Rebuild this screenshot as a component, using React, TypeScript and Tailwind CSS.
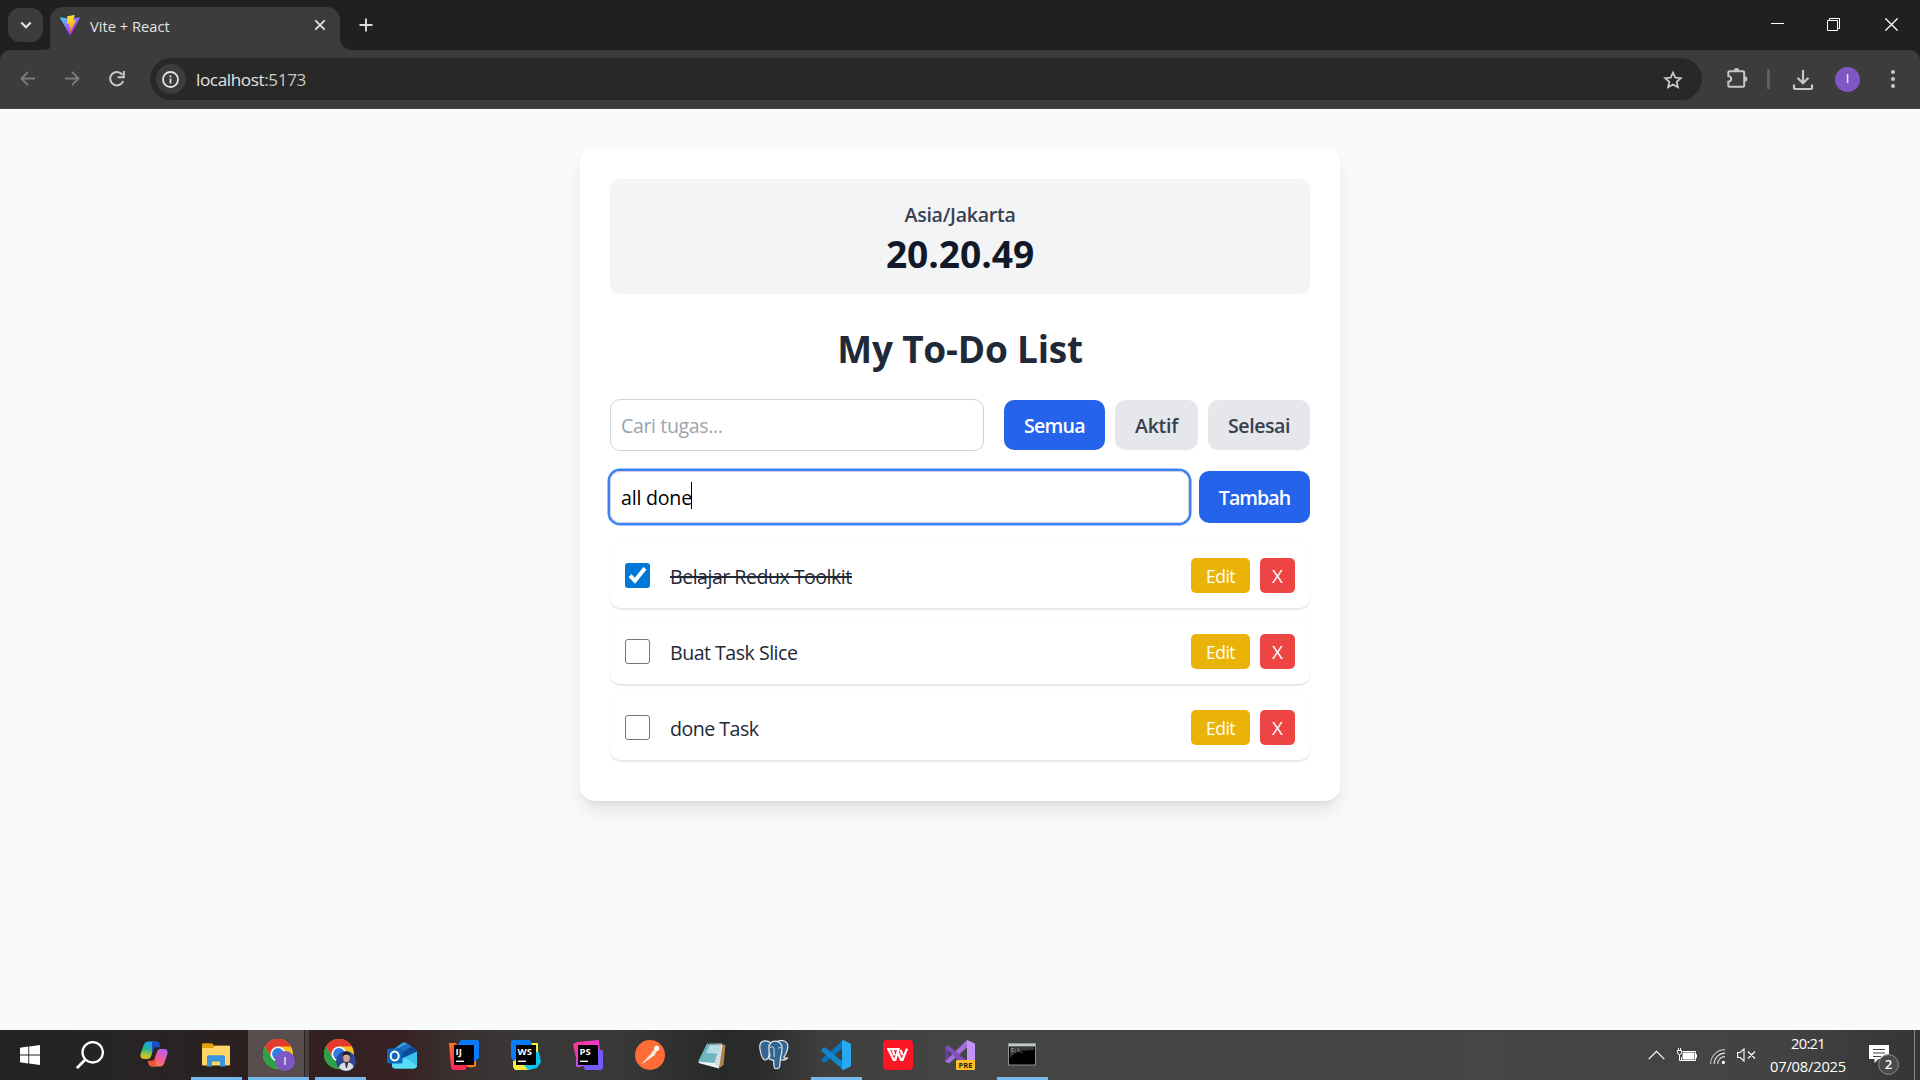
import type { ReactNode } from "react";

const ui = "font-['Open_Sans','Noto_Sans',sans-serif]";

/* ---------- Browser chrome ---------- */

function ViteLogo() {
  return (
    <svg className="size-5" viewBox="0 0 256 257">
      <defs>
        <linearGradient id="viteA" x1="0%" x2="58%" y1="8%" y2="79%">
          <stop offset="0%" stopColor="#41D1FF" />
          <stop offset="100%" stopColor="#BD34FE" />
        </linearGradient>
        <linearGradient id="viteB" x1="43%" x2="50%" y1="2%" y2="89%">
          <stop offset="0%" stopColor="#FFEA83" />
          <stop offset="8%" stopColor="#FFDD35" />
          <stop offset="100%" stopColor="#FFA800" />
        </linearGradient>
      </defs>
      <path
        fill="url(#viteA)"
        d="M255.153 37.938L134.897 252.976c-2.483 4.44-8.862 4.466-11.382.048L.875 37.958c-2.746-4.814 1.371-10.646 6.827-9.67l120.385 21.517a6.537 6.537 0 0 0 2.322-.004l117.867-21.483c5.438-.991 9.574 4.796 6.877 9.62Z"
      />
      <path
        fill="url(#viteB)"
        d="M185.432.063L96.44 17.501a3.268 3.268 0 0 0-2.634 3.014l-5.474 92.456a3.268 3.268 0 0 0 3.997 3.378l24.777-5.718c2.318-.535 4.413 1.507 3.936 3.838l-7.361 36.047c-.495 2.426 1.782 4.5 4.151 3.78l15.304-4.649c2.372-.72 4.652 1.36 4.15 3.788l-11.698 56.621c-.732 3.542 3.979 5.473 5.943 2.437l1.313-2.028l72.516-144.72c1.215-2.423-.88-5.186-3.54-4.672l-25.505 4.922c-2.396.462-4.435-1.77-3.759-4.114l16.646-57.705c.677-2.35-1.37-4.583-3.769-4.113Z"
      />
    </svg>
  );
}

function TabStrip() {
  return (
    <div className="flex h-[50px] bg-[#1f2120]">
      <div className="mt-2 ml-2 flex h-[34px] w-[35px] shrink-0 items-center justify-center rounded-xl bg-[#3c3c3c]">
        <svg className="size-[14px]" viewBox="0 0 14 14" fill="none" stroke="#e3e3e3" strokeWidth="2.2">
          <path d="M2.3 4.5L7 9.2l4.7-4.7" />
        </svg>
      </div>
      <div className="flex w-[13px] shrink-0 items-end self-stretch">
        <svg className="h-[13px] w-[13px]" viewBox="0 0 13 13">
          <path d="M13 0v13H0C8 13 13 8 13 0Z" fill="#3c3c3c" />
        </svg>
      </div>
      <div className="mt-[7px] -ml-[6px] flex h-[43px] w-[290px] shrink-0 items-center rounded-t-[13px] bg-[#3c3c3c] pr-[14px] pb-[7px] pl-[10px]">
        <ViteLogo />
        <span className="mt-px ml-[10px] flex-1 text-[14.7px] leading-5 whitespace-nowrap text-[#e3e3e3]">Vite + React</span>
        <svg className="size-3" viewBox="0 0 12 12" stroke="#e3e3e3" strokeWidth="1.8">
          <path d="M1.3 1.3l9.4 9.4M10.7 1.3L1.3 10.7" />
        </svg>
      </div>
      <div className="flex w-[13px] shrink-0 items-end">
        <svg className="h-[13px] w-[13px]" viewBox="0 0 13 13">
          <path d="M0 0v13h13C5 13 0 8 0 0Z" fill="#3c3c3c" />
        </svg>
      </div>
      <svg className="mt-[18px] ml-[6px] size-[14px]" viewBox="0 0 14 14" stroke="#dcdcdc" strokeWidth="1.9">
        <path d="M7 .5v13M.5 7h13" />
      </svg>
      <div className="ml-auto flex h-[50px] items-center text-white">
        <svg className="-mt-[3px] mr-[43px] h-[13px] w-[13px]" viewBox="0 0 13 13" stroke="currentColor">
          <path d="M0 6.5h13" />
        </svg>
        <svg className="-mt-[1px] mr-[45px] size-[13px]" viewBox="0 0 13 13" fill="none" stroke="currentColor">
          <path d="M.5 2.5h10v10H.5zM2.5 2.5v-2h10v10h-2" />
        </svg>
        <svg className="-mt-[1px] mr-[22px] size-[13px]" viewBox="0 0 13 13" stroke="currentColor" strokeWidth="1.3">
          <path d="M.4.4l12.2 12.2M12.6.4L.4 12.6" />
        </svg>
      </div>
    </div>
  );
}

function Toolbar() {
  return (
    <div className="bg-[#1f2120]">
      <div className="flex h-[59px] items-center rounded-t-[10px] border-b border-[#4a4a4a] bg-[#3c3c3c]">
        <svg className="-mt-px ml-[20px] size-[15px]" viewBox="0 0 15 15" fill="none" stroke="#7d7d7d" strokeWidth="1.8">
          <path d="M15 7.5H1.4M8 .9L1.4 7.5 8 14.1" />
        </svg>
        <svg className="-mt-px ml-[30px] size-[15px]" viewBox="0 0 15 15" fill="none" stroke="#7d7d7d" strokeWidth="1.8">
          <path d="M0 7.5h13.6M7 .9l6.6 6.6L7 14.1" />
        </svg>
        <svg className="-mt-px ml-[29px] size-[16px]" viewBox="0 0 16 16" fill="none" stroke="#c9c9c9" strokeWidth="2">
          <path d="M14.2 10A6.7 6.7 0 1 1 13.3 3.7M14.8 0v6.2H8.6" />
        </svg>
        <div className="ml-[25px] flex h-[42px] w-[1552px] items-center rounded-full bg-[#282828] pr-[19px] pl-[6px]">
          <div className="flex size-[30px] items-center justify-center rounded-full bg-[#3c3c3c]">
            <svg className="mr-px size-[17px]" viewBox="0 0 17 17" fill="none" stroke="#e3e3e3" strokeWidth="1.8">
              <circle cx="8.5" cy="8.5" r="7.5" />
              <path d="M8.5 7.5v5M8.5 4.5v1.8" />
            </svg>
          </div>
          <span className="mt-px ml-[10px] flex-1 text-[17.15px] leading-6 tracking-[-0.023em] text-[#e3e3e3]">
            localhost<span className="text-[#c7c7c7]">:5173</span>
          </span>
          <svg className="mt-px size-5" viewBox="0 0 20 20" fill="none" stroke="#c7c7c7" strokeWidth="1.8">
            <path d="M10 2.6l2.3 5.1 5.5.5-4.1 3.7 1.2 5.4L10 14.500l-4.900 2.800 1.200-5.400L2.200 8.200l5.500-.5z" />
          </svg>
        </div>
        <svg className="-mt-px ml-[24px] h-[22px] w-[22px]" viewBox="0 0 22 22">
          <path
            d="M4 3.300h13.200a1 1 0 0 1 1 1v13.400a1 1 0 0 1-1 1H3.300a1 1 0 0 1-1-1v-4c2-.3 2.900-1.300 2.900-2.900S4.300 8.300 2.300 8V4.300a1 1 0 0 1 1-1z"
            fill="none"
            stroke="#c7c7c7"
            strokeWidth="2"
          />
          <path d="M7.800 2.800a2.700 2.700 0 0 1 5.400 0zM18.700 8.300a2.700 2.700 0 0 1 0 5.400z" fill="#c7c7c7" />
        </svg>
        <div className="ml-[19px] h-5 w-[3px] bg-[#5d5d5d]" />
        <svg className="mt-px ml-[22px] size-[22px]" viewBox="0 0 22 22" fill="none" stroke="#c7c7c7" strokeWidth="2.200">
          <path d="M11 1v13M5.500 8.800L11 14.300l5.500-5.500M2 15.500V19a1 1 0 0 0 1 1h16a1 1 0 0 0 1-1v-3.500" />
        </svg>
        <div className="ml-[21px] flex size-[25px] items-center justify-center rounded-full bg-[#7e57c2] text-[13px] text-white">
          I
        </div>
        <div className="ml-[30px] flex w-[5px] flex-col items-center gap-[3px]">
          <i className="size-1 rounded-full bg-[#c7c7c7]" />
          <i className="size-1 rounded-full bg-[#c7c7c7]" />
          <i className="size-1 rounded-full bg-[#c7c7c7]" />
        </div>
      </div>
    </div>
  );
}

/* ---------- To-do app ---------- */

function TaskRow({ done, children }: { done?: boolean; children: ReactNode }) {
  return (
    <li className="flex h-[65px] items-center rounded-[10px] bg-white px-[15px] shadow-[0_1.25px_1.25px_0_rgb(0_0_0/0.08),0_0.5px_2px_0_rgb(0_0_0/0.03)]">
      {done ? (
        <span className="flex size-[25px] items-center justify-center rounded-[3px] bg-[#0078d7]">
          <svg className="size-[25px]" viewBox="0 0 25 25" fill="none" stroke="#fff" strokeWidth="4">
            <path d="M5 12.700l4.900 5L20 5.300" />
          </svg>
        </span>
      ) : (
        <span className="size-[25px] rounded-[3px] border border-[#767676] bg-white" />
      )}
      <span className="relative mt-[3px] ml-5 text-[19.6px] leading-[30px] tracking-[-0.026em] text-[#1f2937]">
        {children}
        {done && <span className="absolute top-[14px] left-0 h-[2px] w-full bg-[#1f2937]" />}
      </span>
      <button className="ml-auto h-[35px] w-[59px] rounded-[5px] bg-[#eab308] pt-px text-[17.5px] leading-[25px] tracking-[-0.030em] text-white">
        Edit
      </button>
      <button className="ml-[10px] size-[35px] rounded-[5px] bg-[#ef4444] pt-[2px] text-[19px] leading-[25px] text-white">X</button>
    </li>
  );
}

function TodoCard() {
  return (
    <div className="h-[652px] w-[760px] rounded-[15px] bg-white p-[30px] shadow-[0_12.5px_18.75px_-3.75px_rgb(0_0_0/0.1),0_5px_7.5px_-5px_rgb(0_0_0/0.1)]">
      <div className="h-[115px] rounded-[10px] bg-[#f3f4f6] px-5 pt-[21px] text-center">
        <p className="text-[19.6px] leading-[30px] font-semibold tracking-[-0.014em] text-[#374151]">Asia/Jakarta</p>
        <p className="mt-px text-[37.2px] leading-[45px] font-bold tracking-[-0.002em] text-[#111827]">20.20.49</p>
      </div>
      <h1 className="mt-8 text-center text-[37px] leading-[45px] font-bold tracking-[-0.006em] text-[#1f2937]">
        My To-Do List
      </h1>
      <div className="mt-7 flex h-[52px] items-center">
        <div className="flex h-[52px] w-[374px] items-center rounded-[10px] border border-[#d1d5db] px-[10px] pt-[2px] text-[19.6px] tracking-[-0.020em] text-[#9ca3af]">
          Cari tugas...
        </div>
        <button className="ml-5 h-[50px] w-[101px] rounded-[10px] bg-[#2563eb] pt-[2px] text-[19.6px] font-semibold tracking-[-0.036em] text-white">
          Semua
        </button>
        <button className="ml-[10px] h-[50px] w-[83px] rounded-[10px] bg-[#e5e7eb] pt-[2px] text-[19.6px] font-semibold tracking-[-0.015em] text-[#374151]">
          Aktif
        </button>
        <button className="ml-[10px] h-[50px] w-[102px] rounded-[10px] bg-[#e5e7eb] pt-[2px] text-[19.6px] font-semibold tracking-[-0.023em] text-[#374151]">
          Selesai
        </button>
      </div>
      <div className="mt-5 flex h-[52px] gap-[10px]">
        <div className="flex w-[579px] items-center rounded-[10px] border border-[#d1d5db] px-[10px] text-[19.6px] tracking-[-0.011em] text-black shadow-[0_0_0_2.5px_#3b82f6]">
          <span className="pt-[2px]">all done</span>
          <span className="-ml-px -mt-[3px] h-[27px] w-px bg-black" />
        </div>
        <button className="w-[111px] rounded-[10px] bg-[#2563eb] pt-[2px] text-[19.6px] font-semibold tracking-[-0.050em] text-white">
          Tambah
        </button>
      </div>
      <ul className="mt-5 flex flex-col gap-[11px]">
        <TaskRow done>Belajar Redux Toolkit</TaskRow>
        <TaskRow>Buat Task Slice</TaskRow>
        <TaskRow>done Task</TaskRow>
      </ul>
    </div>
  );
}

/* ---------- Taskbar ---------- */

function Slot({ open, active, children }: { open?: boolean; active?: boolean; children: ReactNode }) {
  if (active)
    return (
      <div className="flex h-[50px] w-[61px] shrink-0 flex-col items-start">
        <div className="flex h-[47px] w-[61px]">
          <div className="flex w-[56px] items-center justify-center bg-[#574d4d] pt-[3px] pl-[6px]">{children}</div>
          <div className="w-[5px] border-l border-[#2c2424] bg-[#4a4040]" />
        </div>
        <div className="h-[3px] w-[61px] bg-[#76b9ed]" />
      </div>
    );
  return (
    <div className="flex h-[50px] w-[62px] shrink-0 flex-col items-center">
      <div className="flex h-[47px] items-center justify-center pt-[3px]">{children}</div>
      {open && <div className="ml-px h-[3px] w-[51px] bg-[#76b9ed]" />}
    </div>
  );
}

function Chrome({ person }: { person?: boolean }) {
  return (
    <svg className="size-8" viewBox="0 0 32 32">
      <circle cx="15" cy="15" r="15" fill="#fbc116" />
      <path d="M2 7.500A15 15 0 0 1 28 7.500H15L8.500 18.750Z" fill="#e33b2e" />
      <path d="M2 7.500A15 15 0 0 0 15 30L21.500 18.750H8.500Z" fill="#2aa146" />
      <circle cx="15" cy="15" r="7.600" fill="#fff" />
      <circle cx="15" cy="15" r="5.900" fill="#2f7de9" />
      {person ? (
        <>
          <circle cx="22" cy="22" r="10" fill="#2c4797" />
          <path d="M15 29.100C15.500 25 18 23.500 22.500 23.500s7 1.500 6.800 5.300A10 10 0 0 1 15 29.100Z" fill="#d9dde6" />
          <path d="M20.500 22h4l-1.500 7h-1z" fill="#3a3339" />
          <ellipse cx="22.500" cy="18.500" rx="3.300" ry="4.600" fill="#d8a48c" />
          <path d="M18.600 18c-.6-7 8.400-7 7.800 0-.8-3-6-3.500-7.800 0Z" fill="#1d1a1c" />
        </>
      ) : (
        <>
          <circle cx="22" cy="22" r="10" fill="#7e57c2" />
          <path d="M22 18v8" stroke="#cdbce8" strokeWidth="2" />
        </>
      )}
    </svg>
  );
}

function JetBrains({ id, label, stops, shapes }: { id: string; label: string; stops: [string, string, string]; shapes: ReactNode }) {
  return (
    <svg className="size-[30px]" viewBox="0 0 30 30">
      <defs>
        <linearGradient id={id} x1="0" y1="0" x2="1" y2="1">
          <stop offset="0" stopColor={stops[0]} />
          <stop offset=".55" stopColor={stops[1]} />
          <stop offset="1" stopColor={stops[2]} />
        </linearGradient>
      </defs>
      {shapes}
      <rect x="5" y="5" width="20" height="20" fill="#000" />
      <text x="6.500" y="15" fill="#fff" className="font-['Open_Sans',sans-serif] text-[9.5px] font-bold">
        {label}
      </text>
      <path d="M7 21.300h8" stroke="#fff" strokeWidth="1.400" />
    </svg>
  );
}

function Taskbar() {
  return (
    <div className="flex h-[50px] bg-[linear-gradient(90deg,#232323_0px,#282424_150px,#2c2020_250px,#382223_400px,#3a2f2f_450px,#393938_530px,#383838_620px,#282929_720px,#2b2b2b_760px,#3e3e3d_820px,#454544_960px,#464645_1500px,#434343_1780px,#343536_1920px)]">
      <div className="flex w-[60px] items-center justify-center">
        <svg className="size-5" viewBox="0 0 20 20" fill="#fff">
          <path d="M0 2.700L8.300 1.600v7.900H0zM9.200 1.400L20 0v9.500H9.200zM0 10.500h8.300v7.900L0 17.300zM9.200 10.500H20V20L9.200 18.600z" />
        </svg>
      </div>
      <div className="flex w-[63px] items-center justify-center pr-[3px]">
        <svg className="size-7" viewBox="0 0 28 28" fill="none" stroke="#fff" strokeWidth="2.300">
          <circle cx="16.700" cy="11.300" r="10.200" />
          <path d="M9.400 18.600L.9 27.100" strokeWidth="2.800" />
        </svg>
      </div>
      <Slot>
        <svg className="h-[26px] w-[28px] -translate-y-px" viewBox="0 0 28 26">
          <defs>
            <linearGradient id="cpA" x1=".3" y1="0" x2=".2" y2="1">
              <stop offset="0" stopColor="#179df1" />
              <stop offset=".45" stopColor="#2fb58a" />
              <stop offset=".75" stopColor="#a6c73a" />
              <stop offset="1" stopColor="#f0b421" />
            </linearGradient>
            <linearGradient id="cpB" x1=".8" y1="0" x2=".2" y2="1">
              <stop offset="0" stopColor="#b05ff0" />
              <stop offset=".5" stopColor="#f4589c" />
              <stop offset="1" stopColor="#fd8a45" />
            </linearGradient>
          </defs>
          <path d="M19.500 3.500C18.700 1.200 18 .5 15.800.5H8.300C5.500.5 4.300 2 3.300 5L.8 12.500C-.3 16 .8 18 4 18h3c2.500 0 3.500-1 4.300-3.500l2.400-8c.7-2.300 1.600-3 3.600-3z" fill="url(#cpA)" />
          <path d="M12 .5h3.800c2.200 0 2.900.7 3.700 3l.9 2.800h-4.800c-1 0-1.600.4-2 1.600L12 12z" fill="#1b50cb" />
          <path d="M8.500 22.500c.8 2.300 1.500 3 3.700 3h7.500c2.800 0 4-1.500 5-4.500l2.500-7.500C28.300 10 27.200 8 24 8h-3c-2.500 0-3.500 1-4.300 3.500l-2.400 8c-.7 2.300-1.600 3-3.600 3z" fill="url(#cpB)" />
          <path d="M16 25.500h-3.800c-2.200 0-2.900-.7-3.700-3l-.9-2.800h4.800c1 0 1.600-.4 2-1.600L16 14z" fill="#f0533a" />
        </svg>
      </Slot>
      <Slot open>
        <svg className="h-6 w-7" viewBox="0 0 28 24">
          <path d="M0 1.500C0 .7.500.3 1.200.3H10l2.500 2.500H27a1 1 0 0 1 1 1V22H0z" fill="#e3a108" />
          <path d="M0 5h11l2-2.200h14a1 1 0 0 1 1 1V21.500a1 1 0 0 1-1 1H1a1 1 0 0 1-1-1z" fill="#ffd667" />
          <path d="M5 23.500V14.200a2 2 0 0 1 2-2h14a2 2 0 0 1 2 2v9.300h-5v-5h-8v5z" fill="#3a94de" />
        </svg>
      </Slot>
      <div className="w-px shrink-0" />
      <Slot active>
        <Chrome />
      </Slot>
      <Slot open>
        <Chrome person />
      </Slot>
      <Slot>
        <svg className="h-[27px] w-[30px]" viewBox="0 0 30 27">
          <path d="M4 9L15.500.8a3 3 0 0 1 3.300 0L30 9v3H4z" fill="#2fa3e4" />
          <path d="M8 8L20 1.500 28 7 15 16z" fill="#1f6fc5" />
          <path d="M11 12.500L24.500 4.500 30 9v6L14 20z" fill="#0d4a9a" />
          <path d="M30 9.500V23a3.500 3.500 0 0 1-3.500 3.500H8.500A3.500 3.500 0 0 1 5 23v-2z" fill="#3bc0ef" />
          <path d="M5 21l13-5.200L30 23.500a3.500 3.500 0 0 1-3.500 3H8.500A3.500 3.500 0 0 1 5 23z" fill="#5bdcf5" />
          <rect y="6.500" width="15.500" height="15" rx="1.500" fill="#0f67bb" />
          <ellipse cx="7.700" cy="14" rx="4" ry="4.500" fill="none" stroke="#fff" strokeWidth="2" />
        </svg>
      </Slot>
      <Slot>
        <JetBrains
          id="ij"
          label="IJ"
          stops={["#fc801d", "#fe2857", "#fe2857"]}
          shapes={
            <>
              <path d="M18 20h9v6.500l-5 1-5-1z" fill="#ff7a12" />
              <path d="M0 3h7l12 21-3 6H5a3 3 0 0 1-3-2.500z" fill="url(#ij)" />
              <path d="M12 0h16a2 2 0 0 1 2 2v16l-5 4L8 6z" fill="#087cfa" />
            </>
          }
        />
      </Slot>
      <Slot>
        <JetBrains
          id="ws"
          label="WS"
          stops={["#fcf84a", "#d8f02e", "#07c3f2"]}
          shapes={
            <>
              <path d="M18 3h9v10l-9-2zM2 21l8-3 14 9-6 3H4l-2-3z" fill="#f7ec3b" />
              <path d="M24 12h4l2 10-4 6-9 2-4-5z" fill="#07c3f2" />
              <path d="M0 2a2 2 0 0 1 2-2h17l3 7L7 20H2l-2-3z" fill="#087cfa" />
            </>
          }
        />
      </Slot>
      <Slot>
        <JetBrains
          id="ps"
          label="PS"
          stops={["#ff318c", "#ef3bd0", "#b345f1"]}
          shapes={
            <>
              <path d="M0 4l4-2L26 0l1 12L14 26H4l-1-8z" fill="url(#ps)" />
              <path d="M22 10h7a1 1 0 0 1 1 1v16a3 3 0 0 1-3 3H12l-2-5z" fill="#765af8" />
              <path d="M3 19h5v8H4a1 1 0 0 1-1-1z" fill="#c44bf0" />
            </>
          }
        />
      </Slot>
      <Slot>
        <svg className="size-[30px]" viewBox="0 0 30 30">
          <circle cx="15" cy="15" r="15" fill="#ff6c37" />
          <path d="M6 24l11.500-12.200 2.800 2.700L8.500 23z" fill="#fff" />
          <path d="M6 24l11-10.500" stroke="#ff6c37" strokeWidth=".7" />
          <circle cx="21.600" cy="8.300" r="2.600" fill="#fff" />
          <path d="M16.500 12l3-2.500 2.300 2-2.300 3.200z" fill="#ffe3d8" />
        </svg>
      </Slot>
      <Slot>
        <svg className="h-[27px] w-[28px]" viewBox="0 0 28 27">
          <path d="M23 2l4.500 1L25.500 23l-4 3z" fill="#a8844c" />
          <path d="M9 2l15-.5-3 25L.5 21z" fill="#eef3f4" />
          <path d="M9 2l14 .5-6.500 18.500L0 19.500z" fill="#6fb5c1" />
          <path d="M12 3l10.500.3-3 8.500L8 11z" fill="#b6dde2" />
          <path d="M22.500 3l2 1-3.500 22-4.500-5z" fill="#d5dddf" />
          <path d="M9 1.800h15" stroke="#707779" strokeWidth="2" strokeDasharray="1.200 1" />
        </svg>
      </Slot>
      <Slot>
        <svg className="size-[30px]" viewBox="0 0 30 30" stroke="#e6e9ec" strokeWidth="1.200" strokeLinejoin="round">
          <path d="M4.500 1.200C1 2 .3 6 1.200 10.500 2 15 4 19.500 6 20c1.500.3 2.500-1.500 3.500-2.500L12 3C9.500 1 7 .6 4.500 1.200Z" fill="#336791" />
          <path d="M19 1c4-1 8-.3 9.500 3 1 3-.5 9-3.800 13.500 1 .8 2.300.7 4 .3-1 2-5 3-8 1.500z" fill="#336791" />
          <path d="M12 2.500C16 0 21 1 22.500 5c1.300 4 .2 8.500-1 12.500L20.800 26c-.4 3-5.200 4-5.800.5L14.600 20c-2 .3-3.800 0-5.100-1.800 2-1.700 1.500-3 1-5.200C9.500 9 9.800 4.500 12 2.500Z" fill="#336791" />
          <path d="M11 7.500c1.500-1 3.500-.8 4 1 .4 2.500-.4 5.500.3 8.500M19 8.500c1-1 2-1 3-.8" fill="none" strokeWidth=".9" />
        </svg>
      </Slot>
      <Slot open>
        <svg className="size-[30px]" viewBox="0 0 30 30">
          <path d="M22 8L4.500 22.300a1.500 1.500 0 0 1-2 0L.9 20.800a1.500 1.500 0 0 1 0-2.100L22 .3z" fill="#0a74bd" />
          <path d="M22 22L4.500 7.700a1.500 1.500 0 0 0-2 0L.9 9.200a1.500 1.500 0 0 0 0 2.100L22 29.700z" fill="#1287d0" />
          <path d="M22 .1L29 3.300a1.700 1.700 0 0 1 1 1.600v20.200a1.700 1.700 0 0 1-1 1.600L22 30c-.6.100-1-.2-1-.9V1c0-.7.300-1 1-.9z" fill="#27a8f0" />
        </svg>
      </Slot>
      <Slot>
        <svg className="size-[30px]" viewBox="0 0 30 30">
          <rect width="30" height="30" rx="4" fill="#fc1525" />
          <path d="M4 9.200h11.500l-3.200 10.600h-1.600L5.600 9.500M9.700 10.500l1.900 4.800M15.200 12.800l2.700 7h1.600L24 8.600M17.500 10l2 5" fill="none" stroke="#fff" strokeWidth="2.300" />
        </svg>
      </Slot>
      <Slot>
        <svg className="size-[30px]" viewBox="0 0 30 30">
          <path d="M0 7l3.500-1.500v18L0 21.500z" fill="#6a3fa5" />
          <path d="M0 21.500L22 0l2 5.500L4 23.500z" fill="#a56fdb" />
          <path d="M0 7.500L3.500 5.500 23 22v8z" fill="#7f4fc0" />
          <path d="M22 0l7 3a1.500 1.500 0 0 1 1 1.500V26l-8 4z" fill="#c491f5" />
          <rect x="11" y="20" width="19" height="10" rx="1" fill="#ffbf24" />
          <text x="20.500" y="27.800" textAnchor="middle" fill="#2b2410" className="font-['Open_Sans',sans-serif] text-[7.5px] font-bold">
            PRE
          </text>
        </svg>
      </Slot>
      <Slot open>
        <svg className="h-[23px] w-7 -translate-y-px" viewBox="0 0 28 23">
          <rect x=".5" y=".5" width="27" height="21.500" fill="#000" stroke="#8b9298" />
          <path d="M1 1h26v2.500H1z" fill="#c3cace" />
          <path d="M2 4h24v3C14 7 6 9 2 15z" fill="#3a3a3a" />
          <text x="3" y="9" fill="#ddd" className="font-['Liberation_Mono',monospace] text-[5px]">
            C:\_
          </text>
        </svg>
      </Slot>

      <div className="ml-auto flex h-[50px] items-center">
        <svg className="mr-[12px] h-[10px] w-[17px]" viewBox="0 0 17 10" fill="none" stroke="#fff" strokeWidth="1.300">
          <path d="M.7 9.100l7.800-7.800 7.800 7.800" />
        </svg>
        <svg className="mr-[13px] h-[14px] w-5" viewBox="0 0 20 14" fill="none" stroke="#fff">
          <path d="M5.500 3.500h13v9h-14V9M18.500 6.500h1v3h-1" />
          <path d="M6 5h11v6H6z" fill="#fff" />
          <path d="M1.500 0v2.500M3.500 0v2.500M.5 2.500h4v2a2 2 0 0 1-4 0zM2.500 6.500v6h2" />
        </svg>
        <svg className="mt-[2px] mr-[12px] size-[15px]" viewBox="0 0 15 15" fill="none" stroke="#bbb" strokeWidth="1.100">
          <path d="M.6 15A14.400 14.400 0 0 1 15 .6" />
          <path d="M4.100 15A10.900 10.900 0 0 1 15 4.100M7.600 15A7.400 7.400 0 0 1 15 7.600" stroke="#ddd" />
          <circle cx="13.400" cy="13.400" r="1.600" fill="#fff" stroke="none" />
        </svg>
        <svg className="mr-[14px] h-[14px] w-[19px]" viewBox="0 0 19 14" fill="none" stroke="#fff" strokeWidth="1.100">
          <path d="M.6 4.500h2.600L7 .9v12.200L3.200 9.500H.6zM11 3.500l7 7M18 3.500l-7 7" />
        </svg>
        <div className="flex w-[76px] flex-col items-center text-[14.7px] leading-[23px] whitespace-nowrap text-white">
          <span className="tracking-[-0.047em]">20:21</span>
          <span className="tracking-[-0.013em]">07/08/2025</span>
        </div>
        <div className="ml-[23px] flex h-[50px] w-[31px] pt-[14px]">
          <svg className="h-[32px] w-[31px]" viewBox="0 0 31 32">
            <path d="M0 1h20v14H9.500L5.500 19v-4H0z" fill="#fff" />
            <path d="M4 5.500h12M4 9h12M4 12.500h8" stroke="#444" strokeWidth="1.100" />
            <circle cx="19.500" cy="20.500" r="9.900" fill="#4a4a4b" stroke="#8d8d8d" />
            <text x="19.500" y="25" textAnchor="middle" fill="#fff" className="font-['Open_Sans',sans-serif] text-[13px] font-semibold">
              2
            </text>
          </svg>
        </div>
        <div className="ml-[14px] h-[50px] w-px bg-[#8a8a8a]" />
        <div className="w-[5px]" />
      </div>
    </div>
  );
}

export default function App() {
  return (
    <div className={`${ui} flex h-[1080px] w-[1920px] flex-col overflow-hidden`}>
      <TabStrip />
      <Toolbar />
      <main className="flex flex-1 justify-center bg-[#f9fafb] pt-10">
        <TodoCard />
      </main>
      <Taskbar />
    </div>
  );
}
